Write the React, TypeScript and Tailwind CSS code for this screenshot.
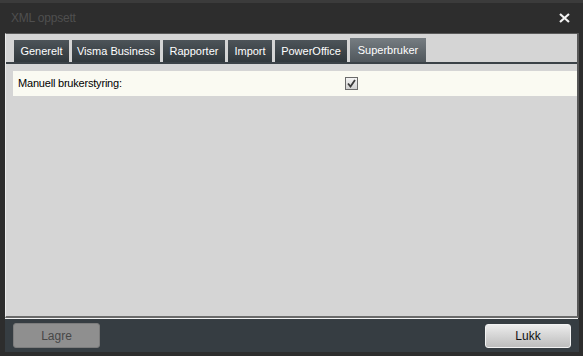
import React from 'react';

const TABS = [
  { label: 'Generelt', width: 'w-[55px]' },
  { label: 'Visma Business', width: 'w-[88px]' },
  { label: 'Rapporter', width: 'w-[62px]' },
  { label: 'Import', width: 'w-[44px]' },
  { label: 'PowerOffice', width: 'w-[72px]' },
  { label: 'Superbruker', width: 'w-[76px]', active: true },
];

const font = { fontFamily: '"Liberation Sans", Arial, sans-serif' };

export default function App() {
  return (
    <div
      className="w-[583px] h-[356px] bg-[#2d2d2d] border-t-[3px] border-[#3b3b3b] flex flex-col overflow-hidden"
      style={font}
    >
      {/* Title bar */}
      <div className="h-[30px] flex items-center justify-between pl-[11px] pr-[12px]">
        <span className="text-[12px] text-[#4f4f4f] tracking-[-0.2px]">XML oppsett</span>
        <svg width="13" height="10" viewBox="0 0 13 10" className="mr-[0px]">
          <path d="M2 1 L11 9 M11 1 L2 9" stroke="#f2f2f2" strokeWidth="2.2" />
        </svg>
      </div>

      <div className="flex-1 flex flex-col ml-[5px] mr-[4px] mb-[4px]">
        {/* Content panel */}
        <div className="flex-1 flex flex-col bg-[#d5d5d5] border-t border-t-[#5a5a5a] border-l border-l-[#ebebeb] border-r-2 border-r-[#575757] border-b-2 border-b-[#6a6a6a]">
          <div className="h-[28px] flex items-end gap-[3px] pl-[8px]">
            {TABS.map(t =>
              t.active ? (
                <div
                  key={t.label}
                  className={`${t.width} h-[24px] flex items-center justify-center text-[11px] text-white bg-gradient-to-b from-[#767d82] to-[#50575c]`}
                >
                  {t.label}
                </div>
              ) : (
                <div
                  key={t.label}
                  className={`${t.width} h-[22px] flex items-center justify-center text-[11px] text-white bg-gradient-to-b from-[#4d5459] to-[#31383c]`}
                >
                  {t.label}
                </div>
              )
            )}
          </div>
          <div className="h-[2px] bg-[#3b4247]" />

          <div className="mt-[7px] ml-[7px] h-[25px] bg-[#fafaf2] flex items-center pl-[5px]">
            <span className="w-[327px] text-[11px] text-black tracking-[-0.2px]">Manuell brukerstyring:</span>
            <div className="w-[13px] h-[13px] border border-[#6a6a6a] bg-gradient-to-b from-[#f4f4f4] to-[#d0d0d0] flex items-center justify-center">
              <svg width="9" height="9" viewBox="0 0 9 9">
                <path d="M1 4.5 L3.5 7.5 L8 1" stroke="#3a3a3a" strokeWidth="1.8" fill="none" />
              </svg>
            </div>
          </div>
        </div>

        <div className="h-[1px] bg-[#f5f5f5] mr-[1px]" />

        {/* Footer */}
        <div className="h-[33px] bg-[#363d42] flex items-center justify-between pl-[8px] pr-[8px]">
          <button className="w-[87px] h-[25px] rounded-[3px] border border-[#7c7c7c] bg-[#8f8f8f] text-[12px] text-[#474747]">
            Lagre
          </button>
          <button className="w-[86px] h-[24px] rounded-[3px] border border-[#f2f2f2] bg-gradient-to-b from-[#ececec] to-[#bdbdbd] text-[12px] text-[#111]">
            Lukk
          </button>
        </div>
      </div>
    </div>
  );
}
